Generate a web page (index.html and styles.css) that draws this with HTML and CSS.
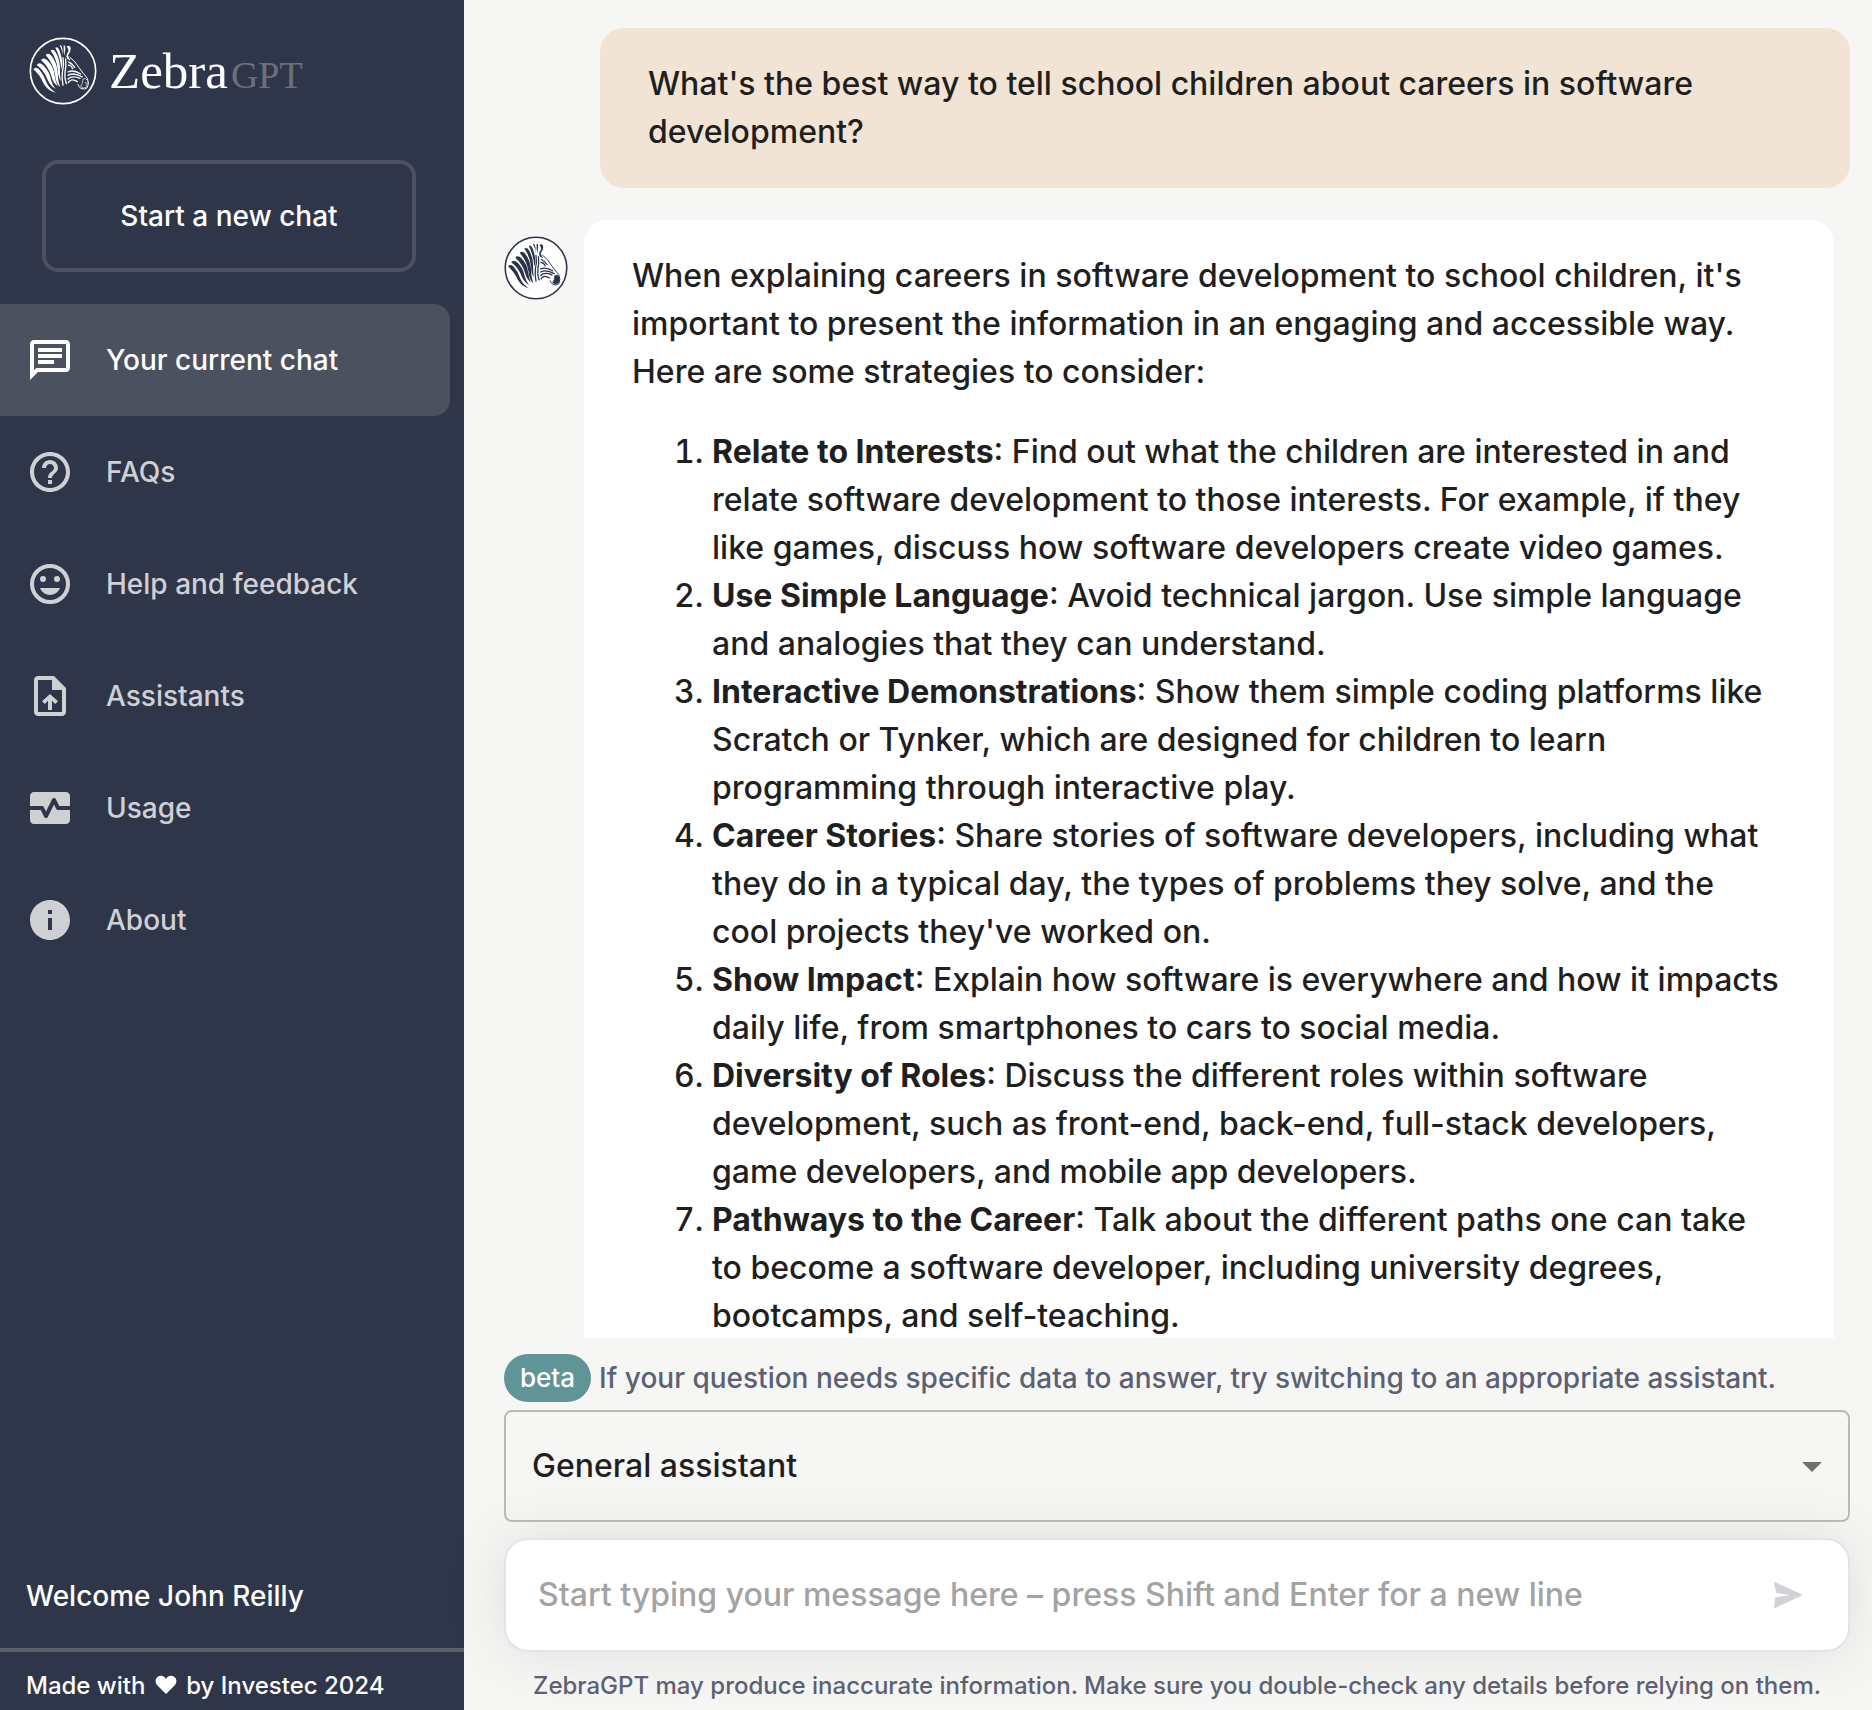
FILE: index.html
```html
<!DOCTYPE html>
<html lang="en">
<head>
<meta charset="utf-8">
<meta name="viewport" content="width=device-width, initial-scale=1">
<title>ZebraGPT</title>
<link rel="stylesheet" href="styles.css">
</head>
<body>
<svg class="sprite" aria-hidden="true">
  <symbol id="zebra" viewBox="88 112 204 204">
    <circle class="zebra-ring" cx="190" cy="214" r="98" stroke-width="5"/>
    <!-- neck stripes, from the outer mane inwards -->
    <g fill="currentColor">
      <path d="M101 209Q106 200 117 208Q132 224 140 248Q149 268 169 279Q145 275 131 250Q121 226 101 209Z"/>
      <path d="M111 196Q118 186 130 196Q149 214 154 240Q158 256 168 268Q152 259 144 240Q134 213 111 196Z"/>
      <path d="M124 181Q131 171 143 182Q162 201 165 228Q167 246 174 260Q160 250 155 230Q147 201 124 181Z"/>
      <path d="M138 166Q146 157 156 169Q172 190 174 218Q174 241 181 262Q168 251 166 224Q160 190 138 166Z"/>
      <path d="M153 153Q161 146 168 158Q180 178 181 204Q180 224 183 244Q175 232 174 208Q170 175 153 153Z"/>
      <path d="M167 144Q174 139 179 151Q187 170 188 194L185 210Q182 172 167 144Z"/>
      <path d="M180 137Q186 135 188 147L190 168Q188 152 180 137Z"/>
      <path d="M192 137Q197 136 197 147L194 168Q191 156 192 137Z"/>
      <path d="M201 140Q212 134 213 148Q213 158 205 167Q207 176 213 182Q203 181 200 171Q200 162 206 156Q207 147 201 140Z"/>
    </g>
    <g fill="none" stroke="currentColor" stroke-width="4" stroke-linecap="round">
      <path d="M190 174Q194 196 188 218Q186 238 190 256M198 178Q200 198 196 218Q194 236 200 252"/>
    </g>
    <!-- face -->
    <g fill="none" stroke="currentColor" stroke-width="3" stroke-linecap="round">
      <path d="M211 173Q227 185 238 204Q251 222 263 236Q269 250 263 264Q254 272 244 266Q237 262 235 255"/>
      <path d="M207 187Q218 191 225 203M206 197Q213 194 219 207" stroke-width="4"/>
      <path d="M205 217Q222 209 243 223M205 227Q222 217 248 232M205 238Q217 226 241 236" stroke-width="4"/>
      <path d="M206 249Q214 234 233 246" stroke-width="4"/>
    </g>
    <path class="zebra-nose" d="M250 238Q259 233 264 243Q267 256 260 263Q251 268 243 260Q249 254 250 238Z"/>
    <path d="M255 248Q262 247 259 258" fill="none" stroke="currentColor" stroke-width="2"/>
  </symbol>
</svg>

<div class="app">
  <aside class="sidebar">
    <a class="brand" href="#" aria-label="ZebraGPT">
      <svg class="brand-mark" aria-hidden="true"><use href="#zebra"/></svg>
      <span class="brand-name">Zebra<span class="brand-suffix">GPT</span></span>
    </a>
    <button class="new-chat" type="button">Start a new chat</button>
    <nav class="nav">
      <a class="nav-item nav-item-active" href="#" aria-current="page">
        <svg class="icon" viewBox="0 0 24 24" aria-hidden="true"><path d="M4 4h16v12H5.17L4 17.17zm0-2c-1.100 0-1.990.900-1.990 2L2 22l4-4h14c1.100 0 2-.900 2-2V4c0-1.100-.900-2-2-2zm2 10h8v2H6zm0-3h12v2H6zm0-3h12v2H6z"/></svg>
        Your current chat
      </a>
      <a class="nav-item" href="#">
        <svg class="icon" viewBox="0 0 24 24" aria-hidden="true"><path d="M11 18h2v-2h-2zm1-16C6.480 2 2 6.480 2 12s4.480 10 10 10 10-4.480 10-10S17.520 2 12 2m0 18c-4.410 0-8-3.590-8-8s3.590-8 8-8 8 3.590 8 8-3.590 8-8 8m0-14c-2.210 0-4 1.790-4 4h2c0-1.100.900-2 2-2s2 .900 2 2c0 2-3 1.750-3 5h2c0-2.250 3-2.500 3-5 0-2.210-1.790-4-4-4"/></svg>
        FAQs
      </a>
      <a class="nav-item" href="#">
        <svg class="icon" viewBox="0 0 24 24" aria-hidden="true"><circle cx="12" cy="12" r="9" fill="none" stroke="currentColor" stroke-width="2"/><circle cx="8.500" cy="9.500" r="1.500"/><circle cx="15.500" cy="9.500" r="1.500"/><path d="M7 14c.800 2 2.700 3.500 5 3.500s4.200-1.500 5-3.500z"/></svg>
        Help and feedback
      </a>
      <a class="nav-item" href="#">
        <svg class="icon" viewBox="0 0 24 24" aria-hidden="true"><path fill-rule="evenodd" d="M14 2H6c-1.100 0-2 .900-2 2v16c0 1.100.900 2 2 2h12c1.100 0 2-.900 2-2V8zM18 20H6V4h7v5h5z"/><path d="M9.410 15.990 8 14.580 12 11l4 3.580-1.410 1.410L13 14.410V19h-2v-4.590z"/></svg>
        Assistants
      </a>
      <a class="nav-item" href="#">
        <svg class="icon" viewBox="0 0 24 24" aria-hidden="true"><path d="M15.110 12.450 14 10.240l-3.110 6.210c-.160.340-.510.550-.890.550s-.730-.210-.890-.550L7.380 13H2v5c0 1.100.900 2 2 2h16c1.100 0 2-.900 2-2v-5h-6c-.380 0-.730-.210-.890-.550"/><path d="M20 4H4c-1.100 0-2 .900-2 2v5h6c.380 0 .730.210.890.550L10 13.760l3.110-6.210c.340-.680 1.450-.680 1.790 0L16.620 11H22V6c0-1.100-.900-2-2-2"/></svg>
        Usage
      </a>
      <a class="nav-item" href="#">
        <svg class="icon" viewBox="0 0 24 24" aria-hidden="true"><path d="M12 2C6.480 2 2 6.480 2 12s4.480 10 10 10 10-4.480 10-10S17.520 2 12 2m1 15h-2v-6h2zm0-8h-2V7h2z"/></svg>
        About
      </a>
    </nav>
    <p class="welcome">Welcome John Reilly</p>
    <p class="credit">Made with
      <svg class="heart" viewBox="0 0 22 20" role="img" aria-label="love"><path d="M11 19 2.500 10.500C-.500 7 .500 3.500 2.500 2 5.500-.200 9 .500 11 4c2-3.500 5.500-4.200 8.500-2 2 1.500 3 5 0 8.500z"/></svg>
      by Investec 2024</p>
  </aside>

  <main class="main">
    <div class="chat">
      <section class="bubble bubble-user">
        <p>What's the best way to tell school children about careers in software development?</p>
      </section>
      <div class="reply">
        <svg class="avatar" aria-hidden="true"><use href="#zebra"/></svg>
        <section class="bubble bubble-reply">
          <p>When explaining careers in software development to school children, it's important to present the information in an engaging and accessible way. Here are some strategies to consider:</p>
          <ol>
            <li><strong>Relate to Interests</strong>: Find out what the children are interested in and relate software development to those interests. For example, if they like games, discuss how software developers create video games.</li>
            <li><strong>Use Simple Language</strong>: Avoid technical jargon. Use simple language and analogies that they can understand.</li>
            <li><strong>Interactive Demonstrations</strong>: Show them simple coding platforms like Scratch or Tynker, which are designed for children to learn programming through interactive play.</li>
            <li><strong>Career Stories</strong>: Share stories of software developers, including what they do in a typical day, the types of problems they solve, and the cool projects they've worked on.</li>
            <li><strong>Show Impact</strong>: Explain how software is everywhere and how it impacts daily life, from smartphones to cars to social media.</li>
            <li><strong>Diversity of Roles</strong>: Discuss the different roles within software development, such as front-end, back-end, full-stack developers, game developers, and mobile app developers.</li>
            <li><strong>Pathways to the Career</strong>: Talk about the different paths one can take to become a software developer, including university degrees, bootcamps, and self-teaching.</li>
          </ol>
        </section>
      </div>
    </div>

    <form class="composer">
      <div class="hint">
        <span class="badge">beta</span>
        <label for="assistant">If your question needs specific data to answer, try switching to an appropriate assistant.</label>
      </div>
      <div class="select">
        <select id="assistant"><option>General assistant</option></select>
        <svg class="icon select-arrow" viewBox="0 0 24 24" aria-hidden="true"><path d="m7 10 5 5 5-5z"/></svg>
      </div>
      <div class="message">
        <input class="message-input" type="text" aria-label="Message" placeholder="Start typing your message here – press Shift and Enter for a new line">
        <button class="send" type="submit" aria-label="Send message">
          <svg viewBox="0 0 28 26" aria-hidden="true"><path d="M0 1Q0 0 1 0L27 12Q29 13 27 14L1 26Q0 26 0 25L1 16Q1 15 3 15L16 13 3 11Q2 11 2 10Z"/></svg>
        </button>
      </div>
      <p class="disclaimer">ZebraGPT may produce inaccurate information. Make sure you double-check any details before relying on them.</p>
    </form>
  </main>
</div>
</body>
</html>
```
FILE: styles.css
```css
:root {
  --navy: #303649;
  --navy-light: #4c515f;
  --page: #f6f6f4;
  --ink: #1f1f1f;
  --muted: #5b6172;
}

* {
  box-sizing: border-box;
}

body {
  margin: 0;
  background: var(--page);
  color: var(--ink);
  font-family: Inter, "Liberation Sans", sans-serif;
  font-optical-sizing: none;
  font-size: 32px;
  font-weight: 500;
  line-height: 48px;
}

p {
  margin: 0;
}

button,
input,
select {
  font: inherit;
  font-optical-sizing: none;
}

.sprite {
  display: none;
}

.app {
  display: grid;
  grid-template-columns: 464px minmax(0, 1fr);
  height: 100vh;
}

.icon {
  width: 48px;
  height: 48px;
  flex: none;
  fill: currentColor;
}

/* Sidebar */

.sidebar {
  display: flex;
  flex-direction: column;
  background: var(--navy);
  color: #fff;
  font-size: 28px;
}

.brand {
  display: flex;
  align-items: center;
  gap: 12px;
  margin: 37px 28px 55px 29px;
  color: #fff;
  text-decoration: none;
}

.brand-mark {
  width: 68px;
  height: 68px;
  --ring-fill: none;
  --nose-fill: var(--navy);
}

.zebra-ring {
  fill: var(--ring-fill);
  stroke: currentColor;
}

.zebra-nose {
  fill: var(--nose-fill);
  stroke: currentColor;
  stroke-width: 2px;
}

.brand-name {
  padding-top: 4px;
  font-family: "Liberation Serif", serif;
  font-size: 51px;
  font-weight: 400;
}

.brand-suffix {
  margin-left: 3px;
  color: #6b707b;
  font-size: 38px;
}

.new-chat {
  height: 112px;
  margin: 0 48px 32px 42px;
  border: 4px solid var(--navy-light);
  border-radius: 16px;
  background: none;
  color: inherit;
}

.nav {
  display: flex;
  flex-direction: column;
  margin-right: 14px;
}

.nav-item {
  display: flex;
  align-items: center;
  gap: 32px;
  height: 112px;
  padding-left: 26px;
  border-radius: 0 16px 16px 0;
  color: #cfd0d4;
  text-decoration: none;
}

.nav-item-active {
  background: var(--navy-light);
  color: #fff;
}

.welcome {
  margin-top: auto;
  padding: 0 26px 28px;
  border-bottom: 4px solid #5c616d;
}

.credit {
  padding: 10px 26px 0;
  font-size: 24px;
}

.heart {
  width: 22px;
  height: 20px;
  margin: 0 3px;
  fill: currentColor;
  vertical-align: -1px;
}

/* Conversation */

.main {
  display: flex;
  flex-direction: column;
  min-height: 0;
  padding: 0 22px 0 40px;
}

.chat {
  display: flex;
  flex: 1;
  flex-direction: column;
  gap: 32px;
  min-height: 0;
  padding-top: 28px;
  overflow-y: auto;
  scrollbar-width: none;
}

.bubble {
  padding: 32px 48px;
  border-radius: 24px;
}

.bubble-user {
  flex: none;
  margin-left: 96px;
  background: #f1e4d4;
}

.reply {
  display: flex;
  flex: none;
  align-items: flex-start;
  gap: 16px;
  margin-right: 16px;
}

.avatar {
  flex: none;
  width: 64px;
  height: 64px;
  margin-top: 16px;
  color: #2a3348;
  --ring-fill: #fff;
  --nose-fill: #2a3348;
}

.bubble-reply {
  flex: 1;
  background: #fff;
}

.bubble-reply ol {
  margin: 32px 0 0;
  padding: 0 4px 0 80px;
}

.bubble-reply strong {
  font-weight: 700;
}

/* Composer */

.composer {
  padding-top: 16px;
}

.hint {
  display: flex;
  align-items: center;
  gap: 8px;
  margin-bottom: 8px;
  color: var(--muted);
  font-size: 28px;
}

.badge {
  padding: 0 16px;
  border-radius: 24px;
  background: #5f9596;
  color: #fff;
  font-size: 26px;
}

.select {
  display: grid;
  align-items: center;
  margin-bottom: 16px;
}

.select select,
.select-arrow {
  grid-area: 1 / 1;
}

.select select {
  width: 100%;
  height: 112px;
  padding: 0 26px;
  border: 2px solid #b9b9b7;
  border-radius: 8px;
  appearance: none;
  background: transparent;
  color: inherit;
}

.select-arrow {
  justify-self: end;
  margin-right: 14px;
  color: #70706e;
  pointer-events: none;
}

.message {
  display: flex;
  align-items: center;
  height: 114px;
  padding: 0 32px;
  border: 2px solid #e3e4e9;
  border-radius: 24px;
  background: #fff;
  box-shadow: 0 0 60px rgb(0 0 0 / 10%);
}

.message-input {
  flex: 1;
  min-width: 0;
  padding: 0;
  border: 0;
  outline: 0;
  background: none;
  color: inherit;
}

.message-input::placeholder {
  color: #a3a3a3;
  opacity: 1;
}

.send {
  display: flex;
  padding: 14px;
  border: 0;
  background: none;
}

.send svg {
  width: 28px;
  height: 26px;
  fill: #d0d2d8;
}

.disclaimer {
  padding-top: 10px;
  color: var(--muted);
  font-size: 24px;
  text-align: center;
}
```
